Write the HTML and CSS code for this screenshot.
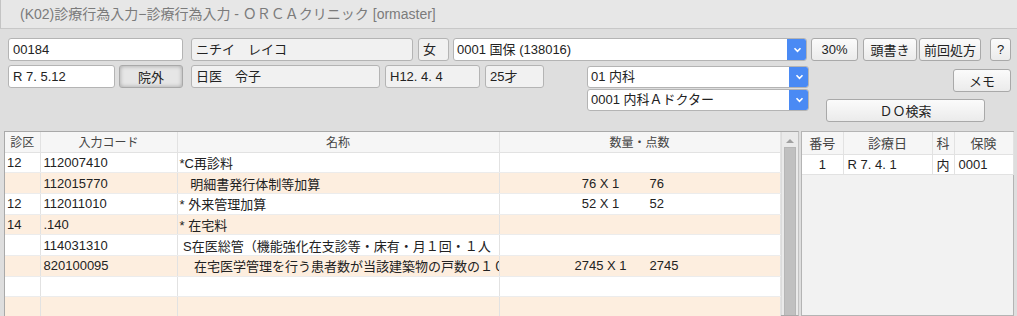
FILE: index.html
```html
<!DOCTYPE html>
<html lang="ja">
<head>
    <meta charset="UTF-8">
    <title>診療行為入力</title>
    <link rel="stylesheet" href="styles.css">
</head>
<body>
    <div class="titlebar">(K02)診療行為入力−診療行為入力 - ＯＲＣＡクリニック [ormaster]</div>

    <div class="form">
        <div class="row">
            <div class="field w-id">00184</div>
            <div class="field ro w-kana">ニチイ　レイコ</div>
            <div class="field ro w-sex">女</div>
            <div class="combo w-hoken">
                <span class="combo-text">0001 国保 (138016)</span>
                <span class="combo-btn"><svg width="9" height="6" viewBox="0 0 9 6"><path d="M1.5 1.2 L4.5 4.3 L7.5 1.2" fill="none" stroke="#fff" stroke-width="1.6"/></svg></span>
            </div>
            <button class="btn w-rate">30%</button>
            <button class="btn w-head">頭書き</button>
            <button class="btn w-prev">前回処方</button>
            <button class="btn w-help">?</button>
        </div>

        <div class="row row2">
            <div class="field w-date">R 7. 5.12</div>
            <button class="btn pressed w-out">院外</button>
            <div class="field ro w-kanji">日医　令子</div>
            <div class="field ro w-birth">H12. 4. 4</div>
            <div class="field ro w-age">25才</div>
            <div class="dept">
                <div class="combo">
                    <span class="combo-text">01 内科</span>
                    <span class="combo-btn"><svg width="9" height="6" viewBox="0 0 9 6"><path d="M1.5 1.2 L4.5 4.3 L7.5 1.2" fill="none" stroke="#fff" stroke-width="1.6"/></svg></span>
                </div>
                <div class="combo">
                    <span class="combo-text">0001 内科Ａドクター</span>
                    <span class="combo-btn"><svg width="9" height="6" viewBox="0 0 9 6"><path d="M1.5 1.2 L4.5 4.3 L7.5 1.2" fill="none" stroke="#fff" stroke-width="1.6"/></svg></span>
                </div>
            </div>
            <div class="side">
                <button class="btn w-memo">メモ</button>
                <button class="btn w-do">ＤＯ検索</button>
            </div>
        </div>
    </div>

    <div class="panels">
        <div class="list">
            <table class="grid">
                <colgroup>
                    <col style="width:35px">
                    <col style="width:137px">
                    <col style="width:322px">
                    <col style="width:281px">
                </colgroup>
                <thead>
                    <tr><th>診区</th><th>入力コード</th><th>名称</th><th>数量・点数</th></tr>
                </thead>
                <tbody>
                    <tr><td class="c-kbn">12</td><td>112007410</td><td>*C再診料</td><td></td></tr>
                    <tr class="alt"><td class="c-kbn"></td><td>112015770</td><td class="pre">   明細書発行体制等加算</td><td><span class="qty">76 X 1</span><span class="pts">76</span></td></tr>
                    <tr><td class="c-kbn">12</td><td>112011010</td><td>* 外来管理加算</td><td><span class="qty">52 X 1</span><span class="pts">52</span></td></tr>
                    <tr class="alt"><td class="c-kbn">14</td><td>.140</td><td>* 在宅料</td><td></td></tr>
                    <tr><td class="c-kbn"></td><td>114031310</td><td class="pre"> S在医総管（機能強化在支診等・床有・月１回・１人</td><td></td></tr>
                    <tr class="alt"><td class="c-kbn"></td><td>820100095</td><td class="pre">    在宅医学管理を行う患者数が当該建築物の戸数の１０</td><td><span class="qty">2745 X 1</span><span class="pts">2745</span></td></tr>
                    <tr><td class="c-kbn"></td><td></td><td></td><td></td></tr>
                    <tr class="alt"><td class="c-kbn"></td><td></td><td></td><td></td></tr>
                </tbody>
            </table>
            <div class="vscroll">
                <div class="arrow-up"></div>
                <div class="thumb"></div>
            </div>
        </div>

        <div class="history">
            <table class="hist">
                <colgroup>
                    <col style="width:41px">
                    <col style="width:89px">
                    <col style="width:22px">
                    <col style="width:59px">
                </colgroup>
                <thead>
                    <tr><th>番号</th><th>診療日</th><th>科</th><th>保険</th></tr>
                </thead>
                <tbody>
                    <tr><td class="center">1</td><td>R 7. 4. 1</td><td class="center">内</td><td>0001</td></tr>
                </tbody>
            </table>
        </div>
    </div>
</body>
</html>
```

FILE: styles.css
```css
* {
    box-sizing: border-box;
}

body {
    margin: 0;
    width: 1017px;
    height: 316px;
    overflow: hidden;
    background: #dedede;
    font-family: "Liberation Sans", "Noto Sans CJK JP", sans-serif;
    font-size: 13px;
    color: #222;
}

.titlebar {
    height: 29px;
    line-height: 28px;
    padding-left: 19px;
    background: #e7e7e7;
    border-left: 1px solid #c4c4c4;
    border-bottom: 1px solid #c8c8c8;
    color: #7b7b7b;
    font-size: 14px;
    white-space: nowrap;
}

/* form area */

.form {
    height: 102px;
    padding: 9px 0 0 8px;
}

.row {
    display: flex;
    align-items: flex-start;
}

.row2 {
    margin-top: 4px;
}

.field {
    height: 23px;
    line-height: 21px;
    padding: 0 4px;
    background: #fff;
    border: 1px solid #b4b4b4;
    border-radius: 3px;
    white-space: nowrap;
    overflow: hidden;
}

.field.ro {
    background: #f1f1f1;
}

.combo {
    display: flex;
    height: 23px;
    background: #fff;
    border: 1px solid #b4b4b4;
    border-radius: 3px;
    overflow: hidden;
}

.combo-text {
    flex: 1;
    padding-left: 3px;
    line-height: 21px;
    white-space: nowrap;
}

.combo-btn {
    width: 20px;
    margin: -1px -1px -1px 0;
    background: #4a8af4;
    display: flex;
    align-items: center;
    justify-content: center;
}

.btn {
    height: 23px;
    padding: 0;
    font: inherit;
    color: #222;
    background: linear-gradient(#fbfbfb, #ebebeb);
    border: 1px solid #a9a9a9;
    border-radius: 3px;
}

.btn.pressed {
    background: #e6e6e6;
    box-shadow: inset 0 0 4px rgba(0,0,0,0.3);
}

.w-id { width: 175px; }
.w-kana { width: 222px; margin-left: 8px; }
.w-sex { width: 31px; margin-left: 5px; }
.w-hoken { width: 354px; margin-left: 4px; }
.w-rate { width: 47px; margin-left: 4px; }
.w-head { width: 54px; margin-left: 5px; }
.w-prev { width: 62px; margin-left: 2px; }
.w-help { width: 21px; margin-left: 9px; }

.w-date { width: 107px; }
.w-out { width: 64px; margin-left: 4px; }
.w-kanji { width: 189px; margin-left: 8px; }
.w-birth { width: 95px; margin-left: 5px; }
.w-age { width: 59px; margin-left: 5px; }

.dept {
    width: 222px;
    margin-left: 43px;
}

.dept .combo {
    height: 22px;
    margin-top: 1px;
}

.dept .combo-text {
    line-height: 20px;
}

.side {
    width: 185px;
    margin-left: 17px;
    display: flex;
    flex-direction: column;
    align-items: flex-end;
}

.w-memo { width: 58px; margin-top: 4px; }
.w-do { width: 159px; margin-top: 7px; align-self: flex-start; }

/* lists */

.panels {
    display: flex;
    padding-left: 4px;
    height: 185px;
}

.list {
    width: 795px;
    display: flex;
    background: #fff;
    border: 1px solid #a9a9a9;
    border-right: 1px solid #c2c2c2;
}

table {
    border-collapse: collapse;
    table-layout: fixed;
}

.grid {
    width: 775px;
    align-self: flex-start;
}

th {
    height: 20px;
    padding: 0;
    font-size: 12px;
    font-weight: normal;
    color: #444;
    background: #f6f6f6;
    border-right: 1px solid #e2e2e2;
    border-bottom: 1px solid #e2e2e2;
    white-space: nowrap;
}

td {
    height: 20.7px;
    padding: 0 3px;
    border-right: 1px solid #e2e2e2;
    border-bottom: 1px solid #ececec;
    white-space: nowrap;
    overflow: hidden;
}

.grid td:nth-child(3) {
    padding-left: 2px;
    padding-right: 0;
}

.grid td:nth-child(4) {
    padding-left: 52px;
}

td.c-kbn {
    padding-left: 2px;
}

td.pre {
    white-space: pre;
}

tr.alt td {
    background: #fdeedf;
}

.qty {
    display: inline-block;
    width: 98px;
    text-align: center;
}

.pts {
    display: inline-block;
}

.vscroll {
    width: 18px;
    background: #eaeaea;
    border-left: 1px solid #dcdcdc;
    display: flex;
    flex-direction: column;
    align-items: center;
}

.arrow-up {
    margin-top: 7px;
    width: 0;
    height: 0;
    border-left: 4px solid transparent;
    border-right: 4px solid transparent;
    border-bottom: 4px solid #a0a0a0;
}

.thumb {
    margin-top: 4px;
    width: 12px;
    flex: 1;
    background: #c0c0c0;
    border: 1px solid #b6b6b6;
    border-bottom: none;
}

.history {
    width: 213px;
    margin-left: 2px;
    background: #f2f2f2;
    border: 1px solid #b4b4b4;
}

.hist {
    width: 211px;
}

.hist th {
    height: 22px;
    font-size: 13px;
}

.hist td {
    height: 18px;
    padding: 0 4px;
    background: #fff;
    border-bottom: 1px solid #e2e2e2;
}

.hist td.center {
    text-align: center;
}
```
